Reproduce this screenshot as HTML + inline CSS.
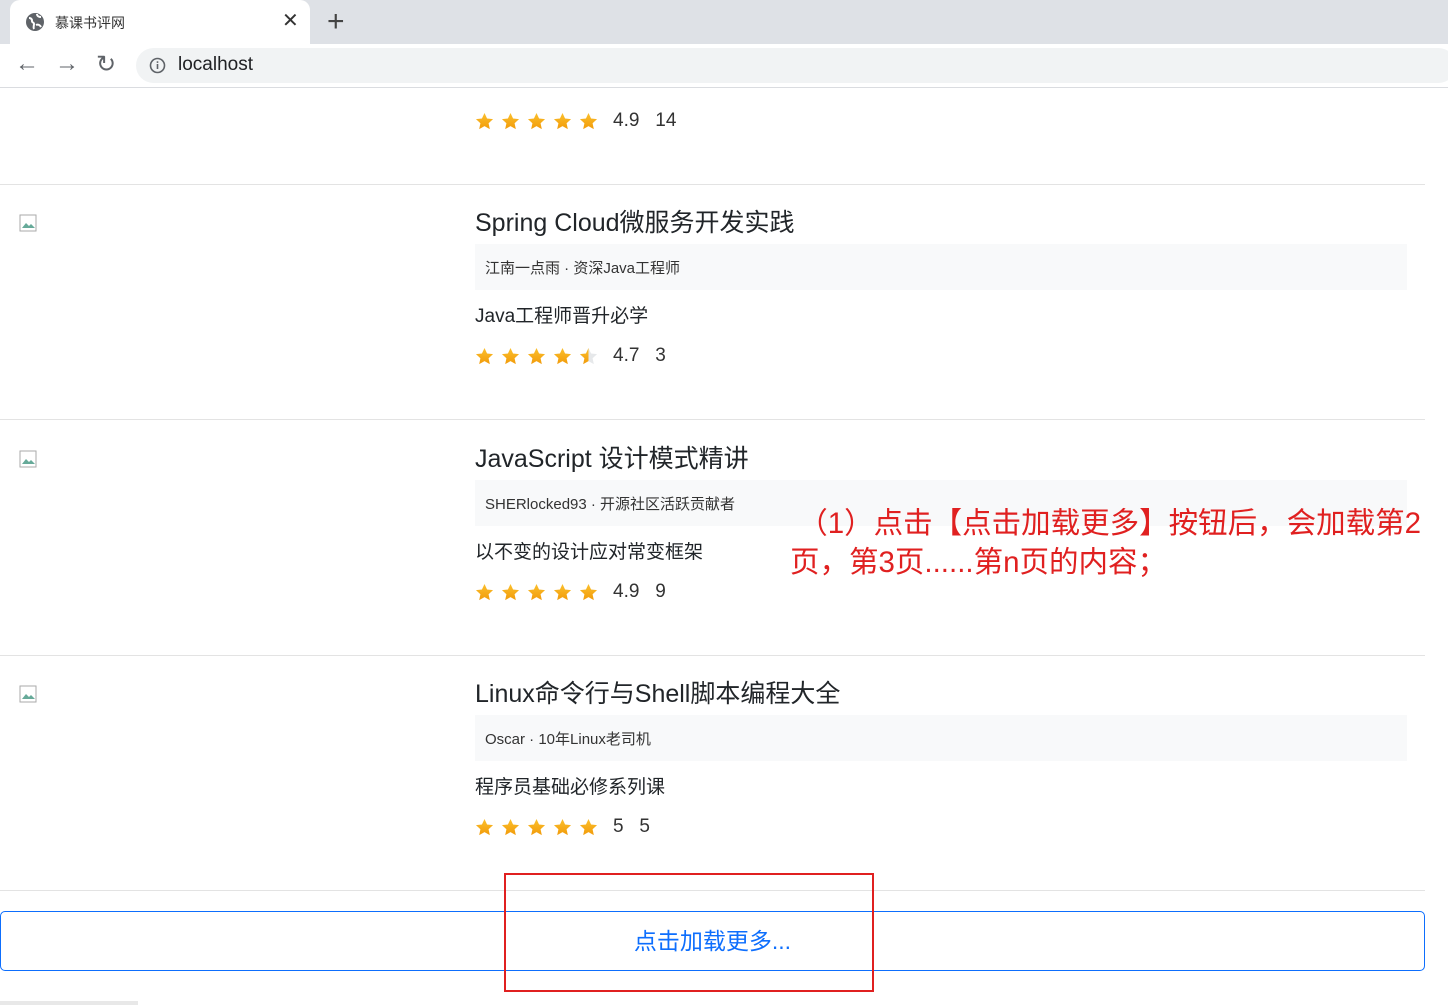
<!DOCTYPE html>
<html><head><meta charset="utf-8"><style>
*{margin:0;padding:0;box-sizing:border-box}
body{width:1448px;height:1005px;overflow:hidden;background:#fff;font-family:"Liberation Sans","Noto Sans CJK SC",sans-serif;color:#212529;position:relative}
.a{position:absolute}
.tabbar{left:0;top:0;width:1448px;height:44px;background:#dee1e6}
.tab{left:10px;top:0;width:300px;height:44px;background:#fff;border-radius:10px 10px 0 0}
.nav{left:0;top:44px;width:1448px;height:44px;background:#fff;border-bottom:1px solid #dadce0}
.url{left:136px;top:48px;width:1320px;height:35px;background:#f1f3f4;border-radius:18px}
.sep{left:0;width:1425px;height:1px;background:#e3e3e3}
.title{left:475px;font-size:25px;color:#212529}
.box{left:475px;width:932px;height:46px;background:#f8f9fa;font-size:15px;color:#333;padding:13px 10px}
.desc{left:475px;font-size:19px;color:#212529}
.stars{left:475px;display:flex;gap:7px}
.num{font-size:19px;color:#333}
.img{left:19px;width:20px;height:18px}
</style></head><body>
<div class="a tabbar"></div>
<div class="a tab"></div>
<svg class="a" style="left:25px;top:12px" width="20" height="20" viewBox="0 0 20 20"><circle cx="10" cy="10" r="9" fill="#5f6368"/><path d="M4 6c2 0 3 1 3 3s2 1 2 3-1 3 0 5M12 2c0 2 2 3 4 3M11 13c2-1 4 0 5 2" stroke="#fff" stroke-width="2" fill="none"/></svg>
<div class="a" style="left:55px;top:13px;font-size:14px;color:#333">慕课书评网</div>
<div class="a" style="left:282px;top:8px;font-size:20px;color:#333">✕</div>
<div class="a" style="left:327px;top:5px;font-size:30px;color:#444">+</div>
<div class="a nav"></div>
<div class="a url"></div>
<div class="a" style="left:15px;top:50px;font-size:24px;color:#5f6368">←</div>
<div class="a" style="left:55px;top:50px;font-size:24px;color:#5f6368">→</div>
<div class="a" style="left:96px;top:50px;font-size:24px;color:#5f6368">↻</div>
<svg class="a" style="left:149px;top:57px" width="17" height="17" viewBox="0 0 17 17"><circle cx="8.5" cy="8.5" r="7" fill="none" stroke="#5f6368" stroke-width="1.6"/><rect x="7.7" y="7" width="1.6" height="5" fill="#5f6368"/><rect x="7.7" y="4.3" width="1.6" height="1.6" fill="#5f6368"/></svg>
<div class="a" style="left:178px;top:54px;font-size:19px;color:#202124">localhost</div>

<svg width="0" height="0" style="position:absolute"><defs>
<linearGradient id="g" x1="0" y1="0" x2="0" y2="1"><stop offset="0" stop-color="#fbc02d"/><stop offset="1" stop-color="#f29b0a"/></linearGradient>
<symbol id="s" viewBox="0 0 20 20"><path d="M10 1l2.7 5.8 6.3.7-4.7 4.3 1.3 6.2L10 14.9 4.4 18l1.3-6.2L1 7.5l6.3-.7z" fill="url(#g)"/></symbol>
<symbol id="h" viewBox="0 0 20 20"><path d="M10 1l2.7 5.8 6.3.7-4.7 4.3 1.3 6.2L10 14.9 4.4 18l1.3-6.2L1 7.5l6.3-.7z" fill="#e6e8ea"/><path d="M10 1v13.9L4.4 18l1.3-6.2L1 7.5l6.3-.7z" fill="url(#g)"/></symbol>
</defs></svg>

<div class="a stars" style="top:112px"><svg width="19" height="19"><use href="#s"/></svg><svg width="19" height="19"><use href="#s"/></svg><svg width="19" height="19"><use href="#s"/></svg><svg width="19" height="19"><use href="#s"/></svg><svg width="19" height="19"><use href="#s"/></svg><span class="num" style="margin-left:8px;margin-top:-2px">4.9&nbsp;&nbsp;&nbsp;14</span></div>
<div class="a sep" style="top:184px"></div>

<svg class="a img" style="top:214px"><rect x="1" y="1" width="16" height="16" fill="#fff" stroke="#aaa"/><path d="M3 14l4-5 3 3 2-2 4 4z" fill="#6a9"/></svg>
<div class="a title" style="top:203px">Spring Cloud微服务开发实践</div>
<div class="a box" style="top:244px">江南一点雨 · 资深Java工程师</div>
<div class="a desc" style="top:301px">Java工程师晋升必学</div>
<div class="a stars" style="top:347px"><svg width="19" height="19"><use href="#s"/></svg><svg width="19" height="19"><use href="#s"/></svg><svg width="19" height="19"><use href="#s"/></svg><svg width="19" height="19"><use href="#s"/></svg><svg width="19" height="19"><use href="#h"/></svg><span class="num" style="margin-left:8px;margin-top:-2px">4.7&nbsp;&nbsp;&nbsp;3</span></div>
<div class="a sep" style="top:419px"></div>

<svg class="a img" style="top:450px"><rect x="1" y="1" width="16" height="16" fill="#fff" stroke="#aaa"/><path d="M3 14l4-5 3 3 2-2 4 4z" fill="#6a9"/></svg>
<div class="a title" style="top:439px">JavaScript 设计模式精讲</div>
<div class="a box" style="top:480px">SHERlocked93 · 开源社区活跃贡献者</div>
<div class="a desc" style="top:537px">以不变的设计应对常变框架</div>
<div class="a stars" style="top:583px"><svg width="19" height="19"><use href="#s"/></svg><svg width="19" height="19"><use href="#s"/></svg><svg width="19" height="19"><use href="#s"/></svg><svg width="19" height="19"><use href="#s"/></svg><svg width="19" height="19"><use href="#s"/></svg><span class="num" style="margin-left:8px;margin-top:-2px">4.9&nbsp;&nbsp;&nbsp;9</span></div>
<div class="a sep" style="top:655px"></div>

<svg class="a img" style="top:685px"><rect x="1" y="1" width="16" height="16" fill="#fff" stroke="#aaa"/><path d="M3 14l4-5 3 3 2-2 4 4z" fill="#6a9"/></svg>
<div class="a title" style="top:674px">Linux命令行与Shell脚本编程大全</div>
<div class="a box" style="top:715px">Oscar · 10年Linux老司机</div>
<div class="a desc" style="top:772px">程序员基础必修系列课</div>
<div class="a stars" style="top:818px"><svg width="19" height="19"><use href="#s"/></svg><svg width="19" height="19"><use href="#s"/></svg><svg width="19" height="19"><use href="#s"/></svg><svg width="19" height="19"><use href="#s"/></svg><svg width="19" height="19"><use href="#s"/></svg><span class="num" style="margin-left:8px;margin-top:-2px">5&nbsp;&nbsp;&nbsp;5</span></div>
<div class="a sep" style="top:890px"></div>

<div class="a" style="left:0;top:911px;width:1425px;height:60px;border:1px solid #0d6efd;border-radius:5px;color:#0d6efd;font-size:23px;text-align:center;line-height:58px">点击加载更多...</div>
<div class="a" style="left:504px;top:873px;width:370px;height:119px;border:2px solid #e02020"></div>
<div class="a" style="left:790px;top:504px;width:650px;font-size:29.5px;line-height:39px;color:#e02020">&nbsp;（1）点击【点击加载更多】按钮后，会加载第2页，第3页......第n页的内容；</div>
<div class="a" style="left:0;top:1001px;width:138px;height:4px;background:#e8e8e8"></div>
</body></html>
